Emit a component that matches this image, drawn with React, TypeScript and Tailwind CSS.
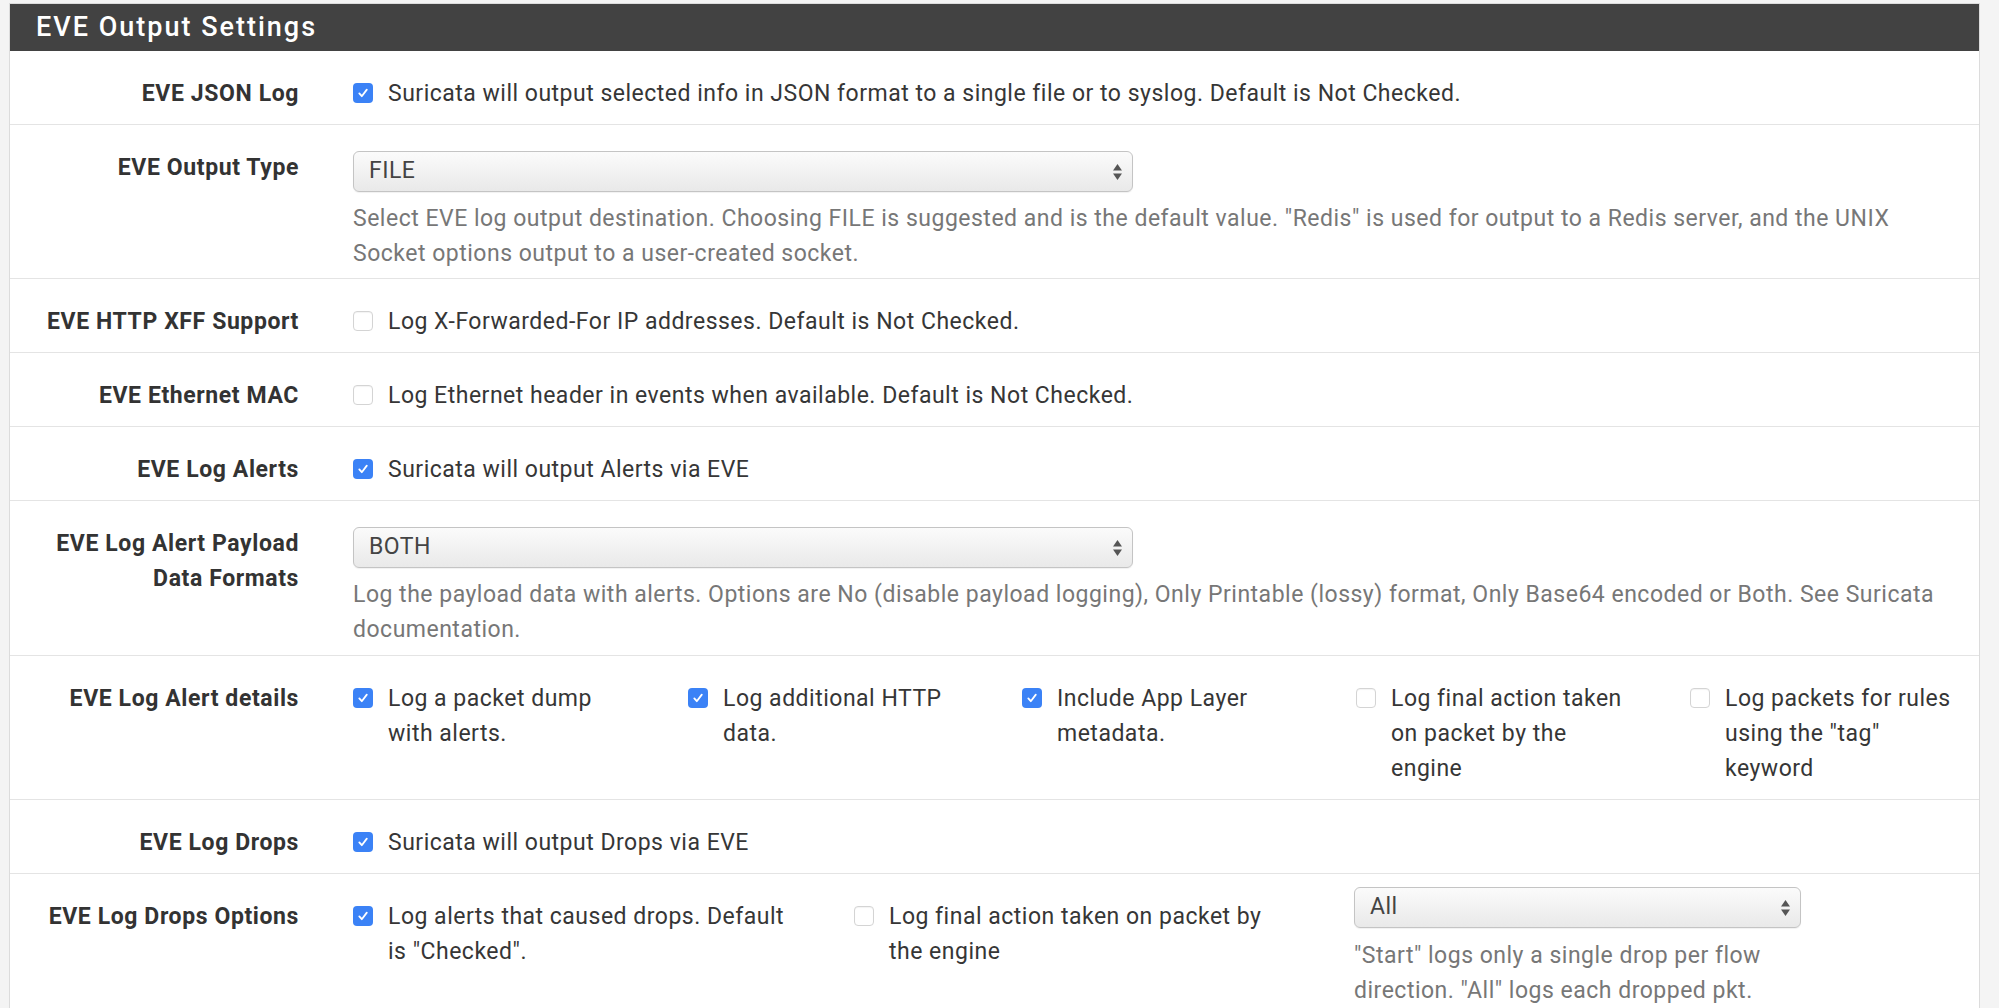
import React from "react";

const font = { fontFamily: "Roboto, 'Liberation Sans', sans-serif" };

function Check({ checked }: { checked: boolean }) {
  return checked ? (
    <span className="mt-[7px] flex h-[20px] w-[20px] shrink-0 items-center justify-center rounded-[4px] bg-[#3b82f6]">
      <svg width="12" height="12" viewBox="0 0 12 12" fill="none">
        <path d="M2.3 6.4 L4.8 9.2 L9.8 2.6" stroke="white" strokeWidth="1.8" strokeLinecap="round" strokeLinejoin="round" />
      </svg>
    </span>
  ) : (
    <span className="mt-[7px] block h-[20px] w-[20px] shrink-0 rounded-[4px] border border-[#d4d4d4] bg-white shadow-[inset_0_1px_1px_rgba(0,0,0,0.05)]" />
  );
}

function CheckItem({ checked, children, className = "" }: { checked: boolean; children: React.ReactNode; className?: string }) {
  return (
    <div className={"flex items-start gap-[15px] " + className}>
      <Check checked={checked} />
      <span className="whitespace-nowrap text-[23px] leading-[35px] tracking-[0.5px] text-[#363636]">{children}</span>
    </div>
  );
}

function Select({ value, className = "" }: { value: string; className?: string }) {
  return (
    <div
      className={
        "flex h-[41px] items-center justify-between rounded-[6px] border border-[#c4c4c4] bg-gradient-to-b from-[#fbfbfb] to-[#e9e9e9] pl-[15px] pr-[9px] shadow-[0_1px_1px_rgba(0,0,0,0.06)] " +
        className
      }
    >
      <span className="text-[23px] tracking-[0.5px] text-[#444]">{value}</span>
      <svg width="11" height="20" viewBox="0 0 11 20">
        <path d="M5.5 2 L10 8.5 L1 8.5 Z" fill="#555" />
        <path d="M5.5 18 L10 11.5 L1 11.5 Z" fill="#555" />
      </svg>
    </div>
  );
}

function Help({ children, className = "" }: { children: React.ReactNode; className?: string }) {
  return (
    <div className={"whitespace-nowrap text-[23px] leading-[35px] tracking-[0.5px] text-[#777] " + className}>{children}</div>
  );
}

function Row({ label, children, pb = "pb-[13px]" }: { label: React.ReactNode; children: React.ReactNode; pb?: string }) {
  return (
    <div className={"flex border-b border-[#e4e4e4] pt-[25px] " + pb}>
      <div className="w-[289px] shrink-0 text-right text-[23px] font-bold leading-[35px] tracking-[0.6px] text-[#333]">
        {label}
      </div>
      <div className="ml-[54px] min-w-0 flex-1">{children}</div>
    </div>
  );
}

export default function App() {
  return (
    <div className="min-h-screen overflow-hidden bg-[#f4f4f4] pl-[9px] pr-[19px] pt-[3px]" style={font}>
      <div className="border border-[#dcdcdc] bg-white">
        <div className="flex h-[47px] items-center bg-[#424242] pl-[26px] text-[27px] font-medium tracking-[2px] text-white">
          EVE Output Settings
        </div>

        <Row label="EVE JSON Log">
          <CheckItem checked>
            Suricata will output selected info in JSON format to a single file or to syslog. Default is Not Checked.
          </CheckItem>
        </Row>

        <Row label="EVE Output Type" pb="pb-[7px]">
          <Select value="FILE" className="mt-[1px] w-[780px]" />
          <Help className="mt-[9px]">
            Select EVE log output destination. Choosing FILE is suggested and is the default value. "Redis" is used for output to a Redis server, and the UNIX
            <br />
            Socket options output to a user-created socket.
          </Help>
        </Row>

        <Row label="EVE HTTP XFF Support">
          <CheckItem checked={false}>Log X-Forwarded-For IP addresses. Default is Not Checked.</CheckItem>
        </Row>

        <Row label="EVE Ethernet MAC">
          <CheckItem checked={false}>Log Ethernet header in events when available. Default is Not Checked.</CheckItem>
        </Row>

        <Row label="EVE Log Alerts">
          <CheckItem checked>Suricata will output Alerts via EVE</CheckItem>
        </Row>

        <Row
          label={
            <>
              EVE Log Alert Payload
              <br />
              Data Formats
            </>
          }
          pb="pb-[8px]"
        >
          <Select value="BOTH" className="mt-[1px] w-[780px]" />
          <Help className="mt-[9px]">
            Log the payload data with alerts. Options are No (disable payload logging), Only Printable (lossy) format, Only Base64 encoded or Both. See Suricata
            <br />
            documentation.
          </Help>
        </Row>

        <Row label="EVE Log Alert details">
          <div className="flex">
            <CheckItem checked className="w-[335px]">
              Log a packet dump
              <br />
              with alerts.
            </CheckItem>
            <CheckItem checked className="w-[334px]">
              Log additional HTTP
              <br />
              data.
            </CheckItem>
            <CheckItem checked className="w-[334px]">
              Include App Layer
              <br />
              metadata.
            </CheckItem>
            <CheckItem checked={false} className="w-[334px]">
              Log final action taken
              <br />
              on packet by the
              <br />
              engine
            </CheckItem>
            <CheckItem checked={false} className="w-[250px]">
              Log packets for rules
              <br />
              using the "tag"
              <br />
              keyword
            </CheckItem>
          </div>
        </Row>

        <Row label="EVE Log Drops">
          <CheckItem checked>Suricata will output Drops via EVE</CheckItem>
        </Row>

        <Row label="EVE Log Drops Options" pb="pb-[20px]">
          <div className="flex">
            <CheckItem checked className="w-[501px]">
              Log alerts that caused drops. Default
              <br />
              is "Checked".
            </CheckItem>
            <CheckItem checked={false} className="w-[500px]">
              Log final action taken on packet by
              <br />
              the engine
            </CheckItem>
            <div className="-mt-[12px]">
              <Select value="All" className="w-[447px]" />
              <Help className="mt-[10px]">
                "Start" logs only a single drop per flow
                <br />
                direction. "All" logs each dropped pkt.
              </Help>
            </div>
          </div>
        </Row>
      </div>
    </div>
  );
}
